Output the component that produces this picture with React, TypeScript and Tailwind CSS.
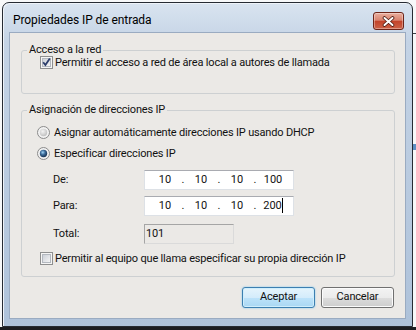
import { Fragment } from "react";

function CheckBox({ checked, id }: { checked?: boolean; id: string }) {
  return (
    <svg width="13" height="13" viewBox="0 0 13 13" className="shrink-0">
      <defs>
        <linearGradient id={id} x1="0" y1="0" x2="1" y2="1">
          <stop offset="0" stopColor="#c9ced6" />
          <stop offset="1" stopColor="#f7f7f7" />
        </linearGradient>
      </defs>
      <rect x="0.5" y="0.5" width="12" height="12" fill="#f5f5f5" stroke="#8e8f8f" />
      <rect x="2.5" y="2.5" width="8" height="8" fill={`url(#${id})`} stroke="#b3b8bf" />
      {checked && (
        <path d="M3.2 6.3 L5.4 9 L9.8 2.6" fill="none" stroke="#2b3d6b" strokeWidth="1.8" />
      )}
    </svg>
  );
}

function Radio({ checked, id }: { checked?: boolean; id: string }) {
  return (
    <svg width="13" height="13" viewBox="0 0 13 13" className="shrink-0">
      <defs>
        <radialGradient id={id} cx="0.4" cy="0.35" r="0.7">
          {checked ? (
            <>
              <stop offset="0" stopColor="#9fd3f5" />
              <stop offset="0.45" stopColor="#3b6a98" />
              <stop offset="1" stopColor="#152c4a" />
            </>
          ) : (
            <>
              <stop offset="0" stopColor="#f4f4f4" />
              <stop offset="1" stopColor="#bdbdbd" />
            </>
          )}
        </radialGradient>
      </defs>
      <circle cx="6.5" cy="6.5" r="6" fill="#f2f2f2" stroke="#8a8a8a" />
      <circle cx="6.5" cy="6.5" r="3.7" fill={`url(#${id})`} />
    </svg>
  );
}

function IpBox({ parts, caret }: { parts: string[]; caret?: boolean }) {
  return (
    <div className="flex h-[20px] w-[150px] items-center border border-[#dde1e6] border-t-[#a9abb1] bg-white pl-[5px] tracking-normal">
      {parts.map((p, i) => (
        <Fragment key={i}>
          {i > 0 && <span className="w-[6px] text-center">.</span>}
          <span className="w-[30px] text-center">
            {p}
            {caret && i === 3 && <span className="inline-block h-[15px] w-px bg-black align-middle" />}
          </span>
        </Fragment>
      ))}
    </div>
  );
}

export default function App() {
  return (
    <div className="flex h-[330px] w-[416px] flex-col overflow-hidden bg-[#f7f8f9] font-['Roboto','Liberation_Sans',sans-serif] text-[11px] tracking-[-0.18px] text-[#111]">
      <div className="h-[2px] shrink-0" />
      <div className="flex h-[325px] shrink-0">
        <div className="w-[2px] shrink-0" />
        <div className="flex w-[411px] shrink-0 flex-col rounded-t-[7px] border border-[#262b33] bg-[linear-gradient(#d9e4f0,#c4d3e5_12%,#aec2da)] shadow-[inset_1px_1px_0_#eef3f9]">
          {/* title bar */}
          <div className="flex h-[29px] shrink-0 items-start justify-between">
            <span className="pl-[10px] pt-[10px] text-[12px] leading-[15px] tracking-[-0.08px] text-black">Propiedades IP de entrada</span>
            <div className="mr-[8px] mt-[9px] flex h-[18px] w-[31px] items-center justify-center rounded-[3px] border border-[#6d2418] bg-[linear-gradient(#eaae9e,#d98470_45%,#c3442b_52%,#cc6248)] shadow-[inset_0_0_0_1px_rgba(255,255,255,0.35)]">
              <svg width="13" height="11" viewBox="0 0 13 11">
                <path d="M2.5 2 L10.5 9 M10.5 2 L2.5 9" stroke="#4d1b12" strokeWidth="3.6" strokeLinecap="round" />
                <path d="M2.5 2 L10.5 9 M10.5 2 L2.5 9" stroke="#ffffff" strokeWidth="2" strokeLinecap="round" />
              </svg>
            </div>
          </div>

          {/* client area */}
          <div className="mx-[6px] mb-[7px] flex flex-1 flex-col border border-[#9aabc1] bg-[#ebe9e6] pt-[10px]">
            <fieldset className="ml-[11px] mr-[10px] rounded-[3px] border border-[#cdd0d2]">
              <legend className="ml-[5px] px-[2px] leading-[14px]">Acceso a la red</legend>
              <div className="-mt-[1px] flex h-[13px] items-center gap-[2px] pl-[18px] leading-[13px]">
                <CheckBox checked id="cb1" />
                <span>Permitir el acceso a red de área local a autores de llamada</span>
              </div>
              <div className="h-[24px]" />
            </fieldset>

            <fieldset className="ml-[11px] mr-[10px] mt-[9px] rounded-[3px] border border-[#cdd0d2]">
              <legend className="ml-[5px] px-[2px] leading-[14px]">Asignación de direcciones IP</legend>
              <div className="flex flex-col pb-[11px] pl-[15px] pt-[9px]">
                <div className="flex h-[13px] items-center gap-[4px] leading-[13px]">
                  <Radio id="rd1" />
                  <span>Asignar automáticamente direcciones IP usando DHCP</span>
                </div>
                <div className="mt-[8px] flex h-[13px] items-center gap-[4px] leading-[13px]">
                  <Radio checked id="rd2" />
                  <span>Especificar direcciones IP</span>
                </div>
                <div className="mt-[10px] flex items-center pl-[16px]">
                  <span className="w-[91px]">De:</span>
                  <IpBox parts={["10", "10", "10", "100"]} />
                </div>
                <div className="mt-[6px] flex items-center pl-[16px]">
                  <span className="w-[91px]">Para:</span>
                  <IpBox parts={["10", "10", "10", "200"]} caret />
                </div>
                <div className="mt-[8px] flex items-center pl-[16px]">
                  <span className="w-[91px]">Total:</span>
                  <div className="flex h-[20px] w-[90px] items-center border border-[#a5a5a5] border-b-[#dadada] border-r-[#dadada] bg-[#ebe9e6] pl-[1px]">
                    101
                  </div>
                </div>
                <div className="ml-[3px] mt-[8px] flex h-[13px] items-center gap-[2px] leading-[13px]">
                  <CheckBox id="cb2" />
                  <span>Permitir al equipo que llama especificar su propia dirección IP</span>
                </div>
              </div>
            </fieldset>

            <div className="mt-[10px] flex justify-end gap-[6px] pr-[11px]">
              <button className="flex h-[21px] w-[73px] items-center justify-center rounded-[3px] border border-[#3c7fb1] bg-[linear-gradient(#e5f4fc,#d4ecfb_50%,#bde3fa_50%,#a9d7f3)] shadow-[inset_0_0_0_1px_#cfeefc,0_0_2px_#7cc4ee]">
                Aceptar
              </button>
              <button className="flex h-[21px] w-[73px] items-center justify-center rounded-[3px] border border-[#707070] bg-[linear-gradient(#f3f3f3,#ebebeb_50%,#dddddd_50%,#cdcdcd)] shadow-[inset_0_0_0_1px_#fbfbfb]">
                Cancelar
              </button>
            </div>
          </div>
        </div>
        <div className="flex w-[3px] shrink-0 flex-col">
          <div className="h-[31px]" />
          <div className="h-px bg-[#3a3f47]" />
          <div className="h-[110px]" />
          <div className="h-[6px] bg-[#5d8fc4]" />
        </div>
      </div>
      <div className="h-[3px] shrink-0 bg-[#1b1d21]" />
    </div>
  );
}
